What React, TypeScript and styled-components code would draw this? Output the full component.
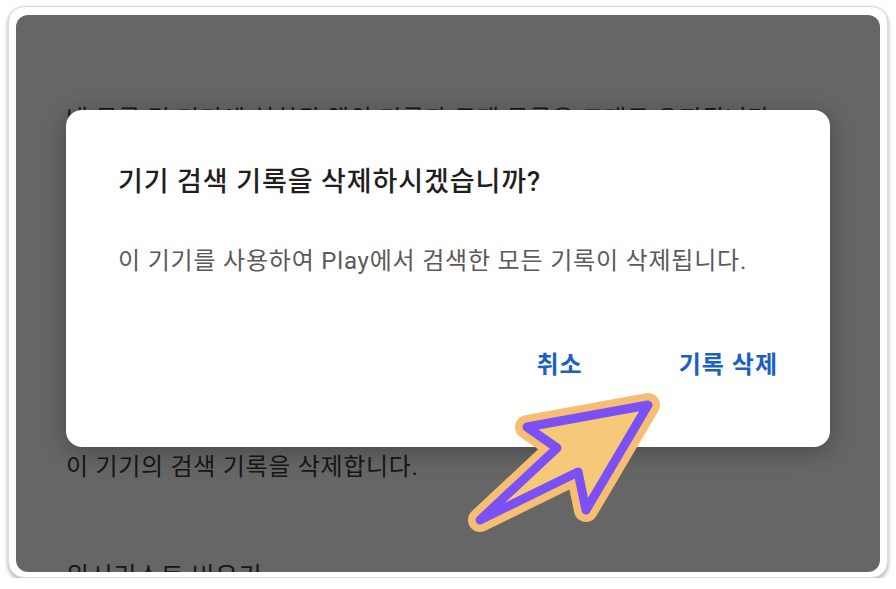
import styled, { createGlobalStyle } from 'styled-components';

const GlobalStyle = createGlobalStyle`
  body {
    margin: 0;
    background: #ffffff;
    font-family: Roboto, "Noto Sans CJK KR", sans-serif;
  }
`;

export default function App() {
  return (
    <>
      <GlobalStyle />
      <Page>
        <Frame>
          <Screen>
            <Settings>
              <SettingText>내 목록 및 기기에 설치된 앱의 기록과 구매 목록은 그대로 유지됩니다</SettingText>
              <SettingText $top={316}>이 기기의 검색 기록을 삭제합니다.</SettingText>
              <SettingHeading>위시리스트 비우기</SettingHeading>
            </Settings>
            <Scrim>
              <Dialog role="dialog" aria-label="기기 검색 기록 삭제">
                <Title>기기 검색 기록을 삭제하시겠습니까?</Title>
                <Message>이 기기를 사용하여 Play에서 검색한 모든 기록이 삭제됩니다.</Message>
                <Actions>
                  <ActionButton>취소</ActionButton>
                  <ActionButton>기록 삭제</ActionButton>
                </Actions>
              </Dialog>
            </Scrim>
            <Arrow viewBox="460 380 210 160" aria-hidden>
              <polygon
                points="648,405 527,427 557,448 480,520 578,472 586,510"
                fill="#f6be72"
                stroke="#f6be72"
                strokeWidth={24}
                strokeLinejoin="round"
              />
              <polygon
                points="648,405 527,427 557,448 480,520 578,472 586,510"
                fill="#f6c978"
                stroke="#7b50f5"
                strokeWidth={9}
                strokeLinejoin="round"
              />
            </Arrow>
          </Screen>
        </Frame>
      </Page>
    </>
  );
}

const Page = styled.div`
  padding: 6px 0 0 8px;
`;

const Frame = styled.div`
  box-sizing: border-box;
  width: 880px;
  height: 572px;
  padding: 8px 7px 5px 7px;
  border: 1px solid #d9d9d9;
  border-radius: 16px;
  background: #ffffff;
  box-shadow: 0 2px 4px rgba(0, 0, 0, 0.35);
`;

const Screen = styled.div`
  position: relative;
  height: 100%;
  border-radius: 12px;
  overflow: hidden;
  background: #ffffff;
`;

const Settings = styled.div`
  display: flex;
  flex-direction: column;
  padding: 88px 0 0 50px;
`;

const SettingText = styled.div<{ $top?: number }>`
  margin-top: ${p => p.$top ?? 0}px;
  font-size: 24px;
  line-height: 32px;
  letter-spacing: 0.7px;
  color: #3a3a3a;
  white-space: nowrap;
`;

const SettingHeading = styled.div`
  margin-top: 77px;
  font-size: 25px;
  line-height: 34px;
  letter-spacing: 0.7px;
  color: #3a3a3a;
`;

const Scrim = styled.div`
  position: absolute;
  inset: 0;
  display: flex;
  justify-content: center;
  align-items: flex-start;
  padding-top: 95px;
  background: rgba(0, 0, 0, 0.6);
`;

const Dialog = styled.div`
  box-sizing: border-box;
  display: flex;
  flex-direction: column;
  width: 764px;
  height: 337px;
  padding: 54px 52px 0 52px;
  border-radius: 16px;
  background: #ffffff;
  box-shadow: 0 4px 24px rgba(0, 0, 0, 0.3);
`;

const Title = styled.h2`
  margin: 0;
  font-size: 27px;
  line-height: 36px;
  font-weight: 500;
  letter-spacing: 0.9px;
  color: #1f1f1f;
`;

const Message = styled.p`
  margin: 45px 0 0 0;
  font-size: 24px;
  line-height: 32px;
  letter-spacing: 0.8px;
  color: #5a5a5a;
`;

const Actions = styled.div`
  display: flex;
  justify-content: flex-end;
  gap: 96px;
  margin-top: 72px;
`;

const ActionButton = styled.button`
  padding: 0;
  border: none;
  background: none;
  font-family: inherit;
  font-size: 24px;
  line-height: 32px;
  font-weight: 700;
  letter-spacing: 1px;
  color: #1a5fc4;
  cursor: pointer;
`;

const Arrow = styled.svg`
  position: absolute;
  left: 444px;
  top: 365px;
  width: 210px;
  height: 160px;
  overflow: visible;
`;
